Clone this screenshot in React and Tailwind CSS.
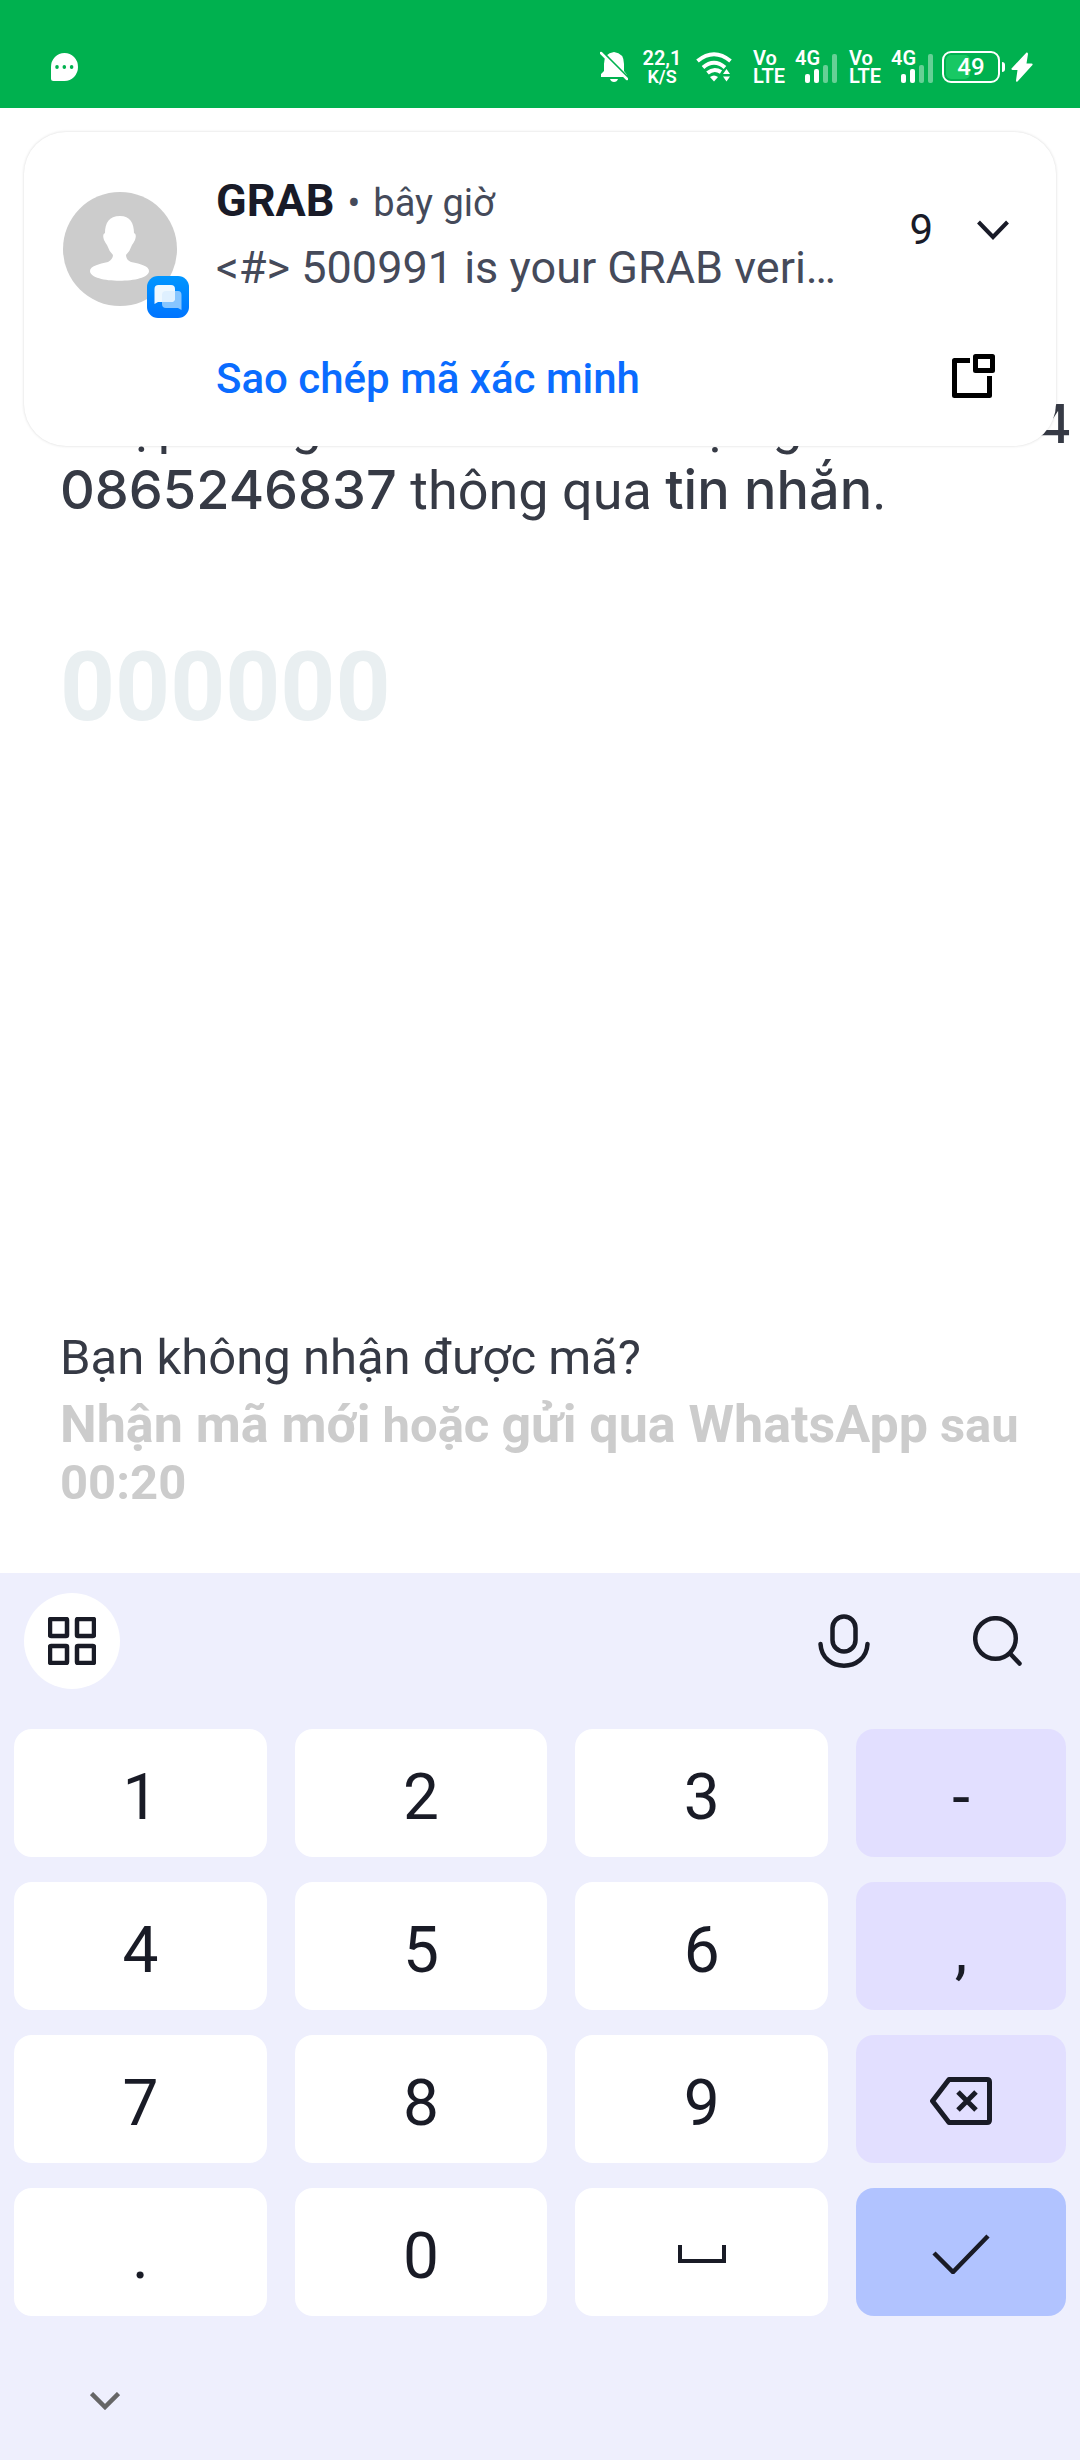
import React from "react";

const stroke = { fill: "none", stroke: "currentColor" };

function SignalGroup() {
  return (
    <div className="flex items-center gap-3">
      <div className="w-[30px] text-[20px] font-semibold leading-[18px]">
        <div>Vo</div>
        <div>LTE</div>
      </div>
      <div className="relative h-9 w-[43px]">
        <span className="absolute left-0 top-0 text-[20px] font-semibold leading-[19px]">4G</span>
        <svg viewBox="0 0 43 36" className="h-9 w-[43px]" fill="currentColor">
          <rect x="10" y="25" width="5" height="9" rx="2" />
          <rect x="19" y="20" width="5" height="14" rx="2" />
          <rect x="28" y="16" width="5" height="18" rx="2" opacity=".4" />
          <rect x="37" y="5" width="5" height="29" rx="2" opacity=".4" />
        </svg>
      </div>
    </div>
  );
}

function StatusBar() {
  return (
    <header className="flex h-[108px] items-center justify-between bg-[#00b14f] pl-[51px] pr-[47px] pt-[26px] text-white">
      <svg viewBox="0 0 27 28" className="h-7 w-[27px]">
        <path d="M13.500 0A13.500 14 0 0 1 13.500 28H2.500Q0 28 0 25.500V14A13.500 14 0 0 1 13.500 0Z" fill="currentColor" />
        <g fill="#00b14f">
          <ellipse cx="6" cy="14" rx="1.800" ry="2" />
          <ellipse cx="13.300" cy="14" rx="1.800" ry="2" />
          <ellipse cx="20.600" cy="14" rx="1.800" ry="2" />
        </g>
      </svg>
      <div className="flex items-center">
        <svg viewBox="0 0 28 32" className="mr-4 h-8 w-7">
          <path d="M1 26V23L4 20V13Q4 2 14 1Q24 2 24 13V20L27 24V26Z" fill="currentColor" />
          <path d="M10 28H18Q17 31 14 31Q11 31 10 28Z" fill="currentColor" />
          <path d="M1 0L28 27" stroke="#00b14f" strokeWidth="3" />
          <path d="M1 2L27 28" stroke="currentColor" strokeWidth="2.500" strokeLinecap="round" />
        </svg>
        <div className="mr-4 flex w-9 flex-col items-center font-semibold">
          <span className="text-[20px] leading-[19px]">22,1</span>
          <span className="text-[18px] leading-[17px]">K/S</span>
        </div>
        <svg viewBox="0 0 37 30" className="mr-5 h-[30px] w-[37px]">
          <g {...stroke} strokeWidth="4">
            <path d="M1.500 9Q18 -4.500 34.500 9" />
            <path d="M7 15.500Q18 6 29 15.500" />
            <path d="M11.500 21Q18 15.500 25 20" />
          </g>
          <path d="M14 25Q18 22 22 25L18 29.500Z" fill="currentColor" />
          <path d="M27 22L30.500 17L34 22ZM27 24.500H34L30.500 29.500Z" fill="currentColor" />
        </svg>
        <div className="mr-2 flex gap-[11px]">
          <SignalGroup />
          <SignalGroup />
        </div>
        <div className="flex items-center gap-[2px]">
          <div className="relative flex h-8 w-[58px] items-center justify-center rounded-[9px] border-2 border-white">
            <div className="absolute bottom-[2px] left-[2px] top-[2px] w-6 rounded-[5px] bg-[#18c864]" />
            <span className="relative text-[24px] font-medium leading-none">49</span>
          </div>
          <div className="h-[10px] w-[3px] rounded-r-sm bg-white" />
          <svg viewBox="0 0 22 30" className="ml-1 h-[30px] w-[22px]" fill="currentColor">
            <path d="M15.500 0.500Q17 0 17 2L15.500 11.500H20.500Q22.500 12 21 13.500L6.500 29.500Q5 30.500 5 28.500L6.500 18H1.500Q-.5 17.500 1 16Z" />
          </svg>
        </div>
      </div>
    </header>
  );
}

function Avatar() {
  return (
    <div className="relative h-[114px] w-[114px] shrink-0">
      <svg viewBox="0 0 114 114" className="h-full w-full">
        <circle cx="57" cy="57" r="57" fill="#ccc" />
        <path d="M57 24C67 24 71 31 71 41Q74 42 72 48Q70 52 69 53Q67 59 63 63Q63 68 68 70C78 72 86 74 86 79C86 92 27 92 27 79C27 74 36 72 45 70Q50 67 50 63Q46 59 44 53Q43 52 41 48Q39 42 42 41C42 31 46 24 57 24Z" fill="#fff" />
      </svg>
      <svg viewBox="0 0 42 42" className="absolute -bottom-3 -right-3 h-[42px] w-[42px]">
        <defs>
          <linearGradient id="badge" x1="0" y1="0" x2="0" y2="1">
            <stop offset="0" stopColor="#0096ff" />
            <stop offset="1" stopColor="#0074ff" />
          </linearGradient>
        </defs>
        <rect width="42" height="42" rx="11" fill="url(#badge)" />
        <path d="M19 15H31Q34.500 15 34.500 19V34L31 32H19Q15 32 15 28V19Q15 15 19 15Z" fill="#86c5ff" />
        <path d="M11.500 9H24Q28 9 28 13V22Q28 26 24 26H11L7.500 28V13Q7.500 9 11.500 9Z" fill="#eff8ff" />
        <path d="M15 26V19Q15 15 19 15H28V22Q28 26 24 26Z" fill="#dff0ff" />
      </svg>
    </div>
  );
}

function Notification() {
  return (
    <section className="absolute inset-x-6 top-[132px] flex h-[314px] rounded-[42px] bg-white pl-[39px] pr-[47px] shadow-[0_0_3px_rgba(0,0,0,0.16)]">
      <div className="pt-[60px]">
        <Avatar />
      </div>
      <div className="ml-[39px] flex min-w-0 flex-1 flex-col pt-[39px]">
        <div className="flex items-start">
          <div className="min-w-0 flex-1">
            <div className="flex items-baseline leading-[60px] text-[#454a5a]">
              <strong className="text-[45px] font-bold text-[#191b28]">GRAB</strong>
              <span className="mx-[13px] text-[38px]">•</span>
              <span className="text-[38px]">bây giờ</span>
            </div>
            <p className="text-[45px] leading-[70px] text-[#454a5a]">&lt;#&gt; 500991 is your GRAB veri…</p>
          </div>
          <button type="button" aria-label="9" className="mt-[29px] flex items-center gap-[44px] text-[#191b28]">
            <span className="text-[42px] leading-[60px]">9</span>
            <svg viewBox="0 0 32 20" className="h-5 w-8" {...stroke} strokeWidth="4">
              <path d="M1.500 2L16 17L30.500 2" />
            </svg>
          </button>
        </div>
        <div className="mt-[46px] flex items-start justify-between">
          <button type="button" className="text-[42px] font-medium leading-[60px] text-[#0a6cff]">Sao chép mã xác minh</button>
          <button type="button" aria-label="Mở" className="mr-[14px] pt-[5px] text-black">
            <svg viewBox="0 0 43 44" className="h-11 w-[43px]" {...stroke} strokeWidth="5" strokeLinejoin="round">
              <path d="M18 6.500H2.500V41.500H37.500V22" />
              <rect x="23.500" y="2.500" width="17" height="14" />
            </svg>
          </button>
        </div>
      </div>
    </section>
  );
}

const keys = ["1", "2", "3", "-", "4", "5", "6", ",", "7", "8", "9", "delete", ".", "0", "space", "done"];

const icons = {
  delete: (
    <svg viewBox="0 0 62 48" className="h-12 w-[62px]" {...stroke} strokeWidth="5" strokeLinejoin="round">
      <path d="M2.500 24L19 2.500H57Q59.500 2.500 59.500 5V43Q59.500 45.500 57 45.500H19Z" />
      <path d="M28 15L46 33M46 15L28 33" />
    </svg>
  ),
  space: (
    <svg viewBox="0 0 48 18" className="h-[18px] w-12" {...stroke} strokeWidth="4">
      <path d="M2 0V16H46V0" />
    </svg>
  ),
  done: (
    <svg viewBox="0 0 58 40" className="h-10 w-[58px]" {...stroke} strokeWidth="4.500">
      <path d="M2 19L21 38L56 2" />
    </svg>
  ),
};

function Key({ name }) {
  const tone =
    name === "done" ? "bg-[#b1c3ff]" : ["-", ",", "delete"].includes(name) ? "bg-[#e2dfff]" : "bg-white";
  const icon = icons[name];
  return (
    <button
      type="button"
      aria-label={name}
      className={`flex h-32 items-center justify-center rounded-[18px] text-[64px] leading-none ${icon ? "pt-[3px]" : "pt-[10px]"} ${tone}`}
    >
      {icon || name}
    </button>
  );
}

function Keyboard() {
  return (
    <section className="flex h-[887px] flex-col bg-[#eeeffd] text-[#191b26]">
      <div className="flex items-center justify-between pb-10 pl-6 pr-[58px] pt-5">
        <button type="button" aria-label="Menu" className="flex h-24 w-24 items-center justify-center rounded-full bg-white">
          <svg viewBox="0 0 48 48" className="h-12 w-12" {...stroke} strokeWidth="4.500">
            <rect x="2" y="2" width="17" height="17" rx="1" />
            <rect x="29" y="2" width="17" height="17" rx="1" />
            <rect x="2" y="29" width="17" height="17" rx="1" />
            <rect x="29" y="29" width="17" height="17" rx="1" />
          </svg>
        </button>
        <div className="flex items-center gap-[103px]">
          <button type="button" aria-label="Micro">
            <svg viewBox="0 0 52 54" className="h-[54px] w-[52px]" {...stroke} strokeWidth="4.500" strokeLinecap="round">
              <rect x="14.500" y="2.500" width="23" height="35" rx="11.500" />
              <path d="M2.500 30C4 59 48 59 49.500 30" />
            </svg>
          </button>
          <button type="button" aria-label="Search">
            <svg viewBox="0 0 49 50" className="h-[50px] w-[49px]" {...stroke} strokeWidth="4.500" strokeLinecap="round">
              <circle cx="22.500" cy="22.500" r="20.300" />
              <path d="M37.500 38L46.500 47.500" />
            </svg>
          </button>
        </div>
      </div>
      <div className="grid grid-cols-[253fr_253fr_253fr_210fr] gap-x-[28px] gap-y-[25px] px-[14px]">
        {keys.map((k) => (
          <Key key={k} name={k} />
        ))}
      </div>
      <button type="button" aria-label="Hide" className="ml-[90px] mt-[76px] w-[30px] text-[#666]">
        <svg viewBox="0 0 30 18" className="h-[18px] w-[30px]" {...stroke} strokeWidth="4.500">
          <path d="M1.500 1.500L15 15L28.500 1.500" />
        </svg>
      </button>
    </section>
  );
}

export default function App() {
  return (
    <div className="relative flex min-h-screen flex-col bg-white font-['Roboto',sans-serif] text-[#363a45]">
      <StatusBar />
      <main className="flex flex-1 flex-col pl-[60px]">
        <div className="mt-[283px] text-[54px] leading-[65px]">
          <p className="whitespace-nowrap">
            Nhập mã gồm 6 chữ số được gửi đến{" "}
            <span className="font-['Inter',sans-serif] font-medium">+84</span>
          </p>
          <p>
            <span className="font-['Inter',sans-serif] font-medium">0865246837</span> thông qua{" "}
            <span className="font-['Inter',sans-serif] font-medium">tin nhắn</span>.
          </p>
        </div>
        <input
          aria-label="OTP"
          placeholder="000000"
          inputMode="numeric"
          className="mt-[104px] h-[120px] w-full text-[96px] font-bold outline-none placeholder:text-[#e9eff1] placeholder:opacity-100"
        />
        <div className="mb-[62px] mt-auto">
          <p className="mb-[3px] text-[49px] leading-[70px]">Bạn không nhận được mã?</p>
          <div className="flex flex-wrap items-baseline gap-x-3 text-[49px] font-bold leading-[57px] text-[#ccc]">
            <button type="button" className="text-[52px]">Nhận mã mới</button>
            <span>hoặc</span>
            <button type="button" className="text-[52px]">gửi qua WhatsApp</button>
            <span>sau</span>
            <span>00:20</span>
          </div>
        </div>
      </main>
      <Keyboard />
      <Notification />
    </div>
  );
}
